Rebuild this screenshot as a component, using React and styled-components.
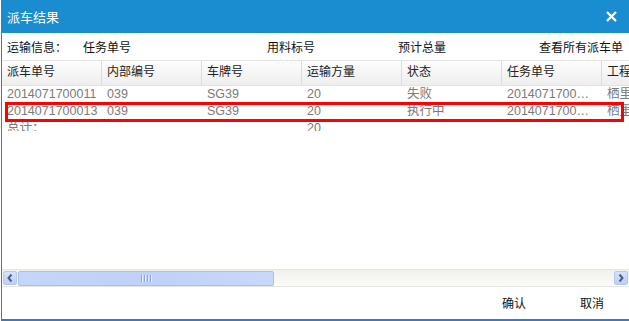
import React from 'react'
import styled, { createGlobalStyle } from 'styled-components'

const GlobalStyle = createGlobalStyle`
  html, body {
    margin: 0;
    padding: 0;
    background: #fff;
  }
  body {
    font-family: "Liberation Sans", "Noto Sans CJK SC", sans-serif;
    font-size: 12px;
  }
`

const Dialog = styled.div`
  width: 629px;
  height: 321px;
  display: flex;
  flex-direction: column;
  overflow: hidden;
  background: #fff;
`

const TitleBar = styled.div`
  height: 33px;
  flex: none;
  margin-left: 1px;
  background: #1a8dd0;
  display: flex;
  align-items: center;
  justify-content: space-between;
  padding: 0 12px 0 6px;
  color: #fff;
  font-size: 13px;
`

const Body = styled.div`
  flex: 1;
  display: flex;
  flex-direction: column;
  margin-left: 1px;
  border-left: 1px solid #3a7bbf;
  border-bottom: 2px solid #3a7bbf;
  min-height: 0;
`

const InfoRow = styled.div`
  height: 27px;
  flex: none;
  display: grid;
  grid-template-columns: 76px 184px 131px 141px auto;
  align-items: center;
  padding-left: 5px;
  color: #111;
  border-bottom: 1px solid #e4e4e4;
  white-space: nowrap;
`

const Grid = styled.div`
  position: relative;
  flex: none;
  height: 208px;
  overflow: hidden;
`

const Row = styled.div`
  display: grid;
  grid-template-columns: repeat(7, 100px);
  height: ${p => p.$height || 17}px;
  overflow: hidden;
  color: ${p => (p.$head ? '#222' : '#7a7a7a')};
  background: ${p => (p.$head ? 'linear-gradient(#fdfdfd, #eeeeee)' : 'transparent')};
  border-bottom: ${p => (p.$head ? '1px solid #e2e2e2' : 'none')};
  font-size: ${p => (p.$head ? 12 : 12.5)}px;
`

const Cell = styled.div`
  padding-left: 5px;
  padding-right: ${p => p.$pr || 4}px;
  line-height: ${p => (p.$head ? 23 : 17)}px;
  white-space: nowrap;
  overflow: hidden;
  text-overflow: ellipsis;
  border-right: ${p => (p.$head ? '1px solid #dcdcdc' : 'none')};
`

const Highlight = styled.div`
  position: absolute;
  left: 3px;
  top: 41px;
  width: 613px;
  height: 14px;
  border: 3px solid #f00;
  pointer-events: none;
`

const ScrollBar = styled.div`
  height: 16px;
  flex: none;
  display: flex;
  align-items: center;
  gap: 1px;
  padding: 0 1px 0 1px;
  background: linear-gradient(#f1f1ec, #fbfbf9);
  border-top: 1px solid #e6e6e0;
  border-bottom: 1px solid #e6e6e0;
`

const ArrowButton = styled.div`
  width: 14px;
  height: 14px;
  box-sizing: border-box;
  border: 1px solid #b5c8ee;
  border-radius: 2px;
  background: linear-gradient(#d6e2fb, #bccff5);
  display: flex;
  align-items: center;
  justify-content: center;
  margin-left: ${p => (p.$right ? 'auto' : '0')};
`

const Thumb = styled.div`
  width: 256px;
  height: 15px;
  box-sizing: border-box;
  border: 1px solid #a8bfea;
  border-radius: 2px;
  background: linear-gradient(90deg, #c5d6fb, #bfd1f8 50%, #c8d8fb);
  display: flex;
  align-items: center;
  justify-content: center;
  gap: 1px;
`

const Grip = styled.span`
  width: 1px;
  height: 7px;
  background: #8da6e0;
  border-right: 1px solid #e4ecfd;
`

const Footer = styled.div`
  flex: 1;
  display: flex;
  align-items: center;
  justify-content: flex-end;
  gap: 54px;
  padding-right: 25px;
  padding-bottom: 1px;
  color: #111;
`

const FooterButton = styled.span`
  cursor: pointer;
`

const columns = ['派车单号', '内部编号', '车牌号', '运输方量', '状态', '任务单号', '工程名称']

const rows = [
  ['2014071700011', '039', 'SG39', '20', '失败', '20140717000011', '栖里工程'],
  ['2014071700013', '039', 'SG39', '20', '执行中', '20140717000013', '栖里工程'],
]

const Arrow = ({ dir }) => (
  <svg width="6" height="8" viewBox="0 0 6 8">
    <path
      d={dir === 'left' ? 'M4.5 0.5 L1.5 4 L4.5 7.5' : 'M1.5 0.5 L4.5 4 L1.5 7.5'}
      fill="none"
      stroke="#4b5f86"
      strokeWidth="2"
    />
  </svg>
)

const App = () => (
  <Dialog>
    <GlobalStyle />
    <TitleBar>
      <span>派车结果</span>
      <svg width="11" height="11" viewBox="0 0 11 11">
        <path d="M1 1 L10 10 M10 1 L1 10" stroke="#fff" strokeWidth="2.2" />
      </svg>
    </TitleBar>
    <Body>
      <InfoRow>
        <span>运输信息：</span>
        <span>任务单号</span>
        <span>用料标号</span>
        <span>预计总量</span>
        <span>查看所有派车单</span>
      </InfoRow>
      <Grid>
        <Row $head $height={24}>
          {columns.map(c => (
            <Cell key={c} $head>{c}</Cell>
          ))}
        </Row>
        {rows.map(r => (
          <Row key={r[0]}>
            {r.map((v, i) => (
              <Cell key={i} $pr={i === 5 ? 9 : 4}>{v}</Cell>
            ))}
          </Row>
        ))}
        <Row $height={11}>
          <Cell>总计：</Cell>
          <Cell />
          <Cell />
          <Cell>20</Cell>
        </Row>
        <Highlight />
      </Grid>
      <ScrollBar>
        <ArrowButton>
          <Arrow dir="left" />
        </ArrowButton>
        <Thumb>
          <Grip />
          <Grip />
          <Grip />
          <Grip />
        </Thumb>
        <ArrowButton $right>
          <Arrow dir="right" />
        </ArrowButton>
      </ScrollBar>
      <Footer>
        <FooterButton>确认</FooterButton>
        <FooterButton>取消</FooterButton>
      </Footer>
    </Body>
  </Dialog>
)

export default App
